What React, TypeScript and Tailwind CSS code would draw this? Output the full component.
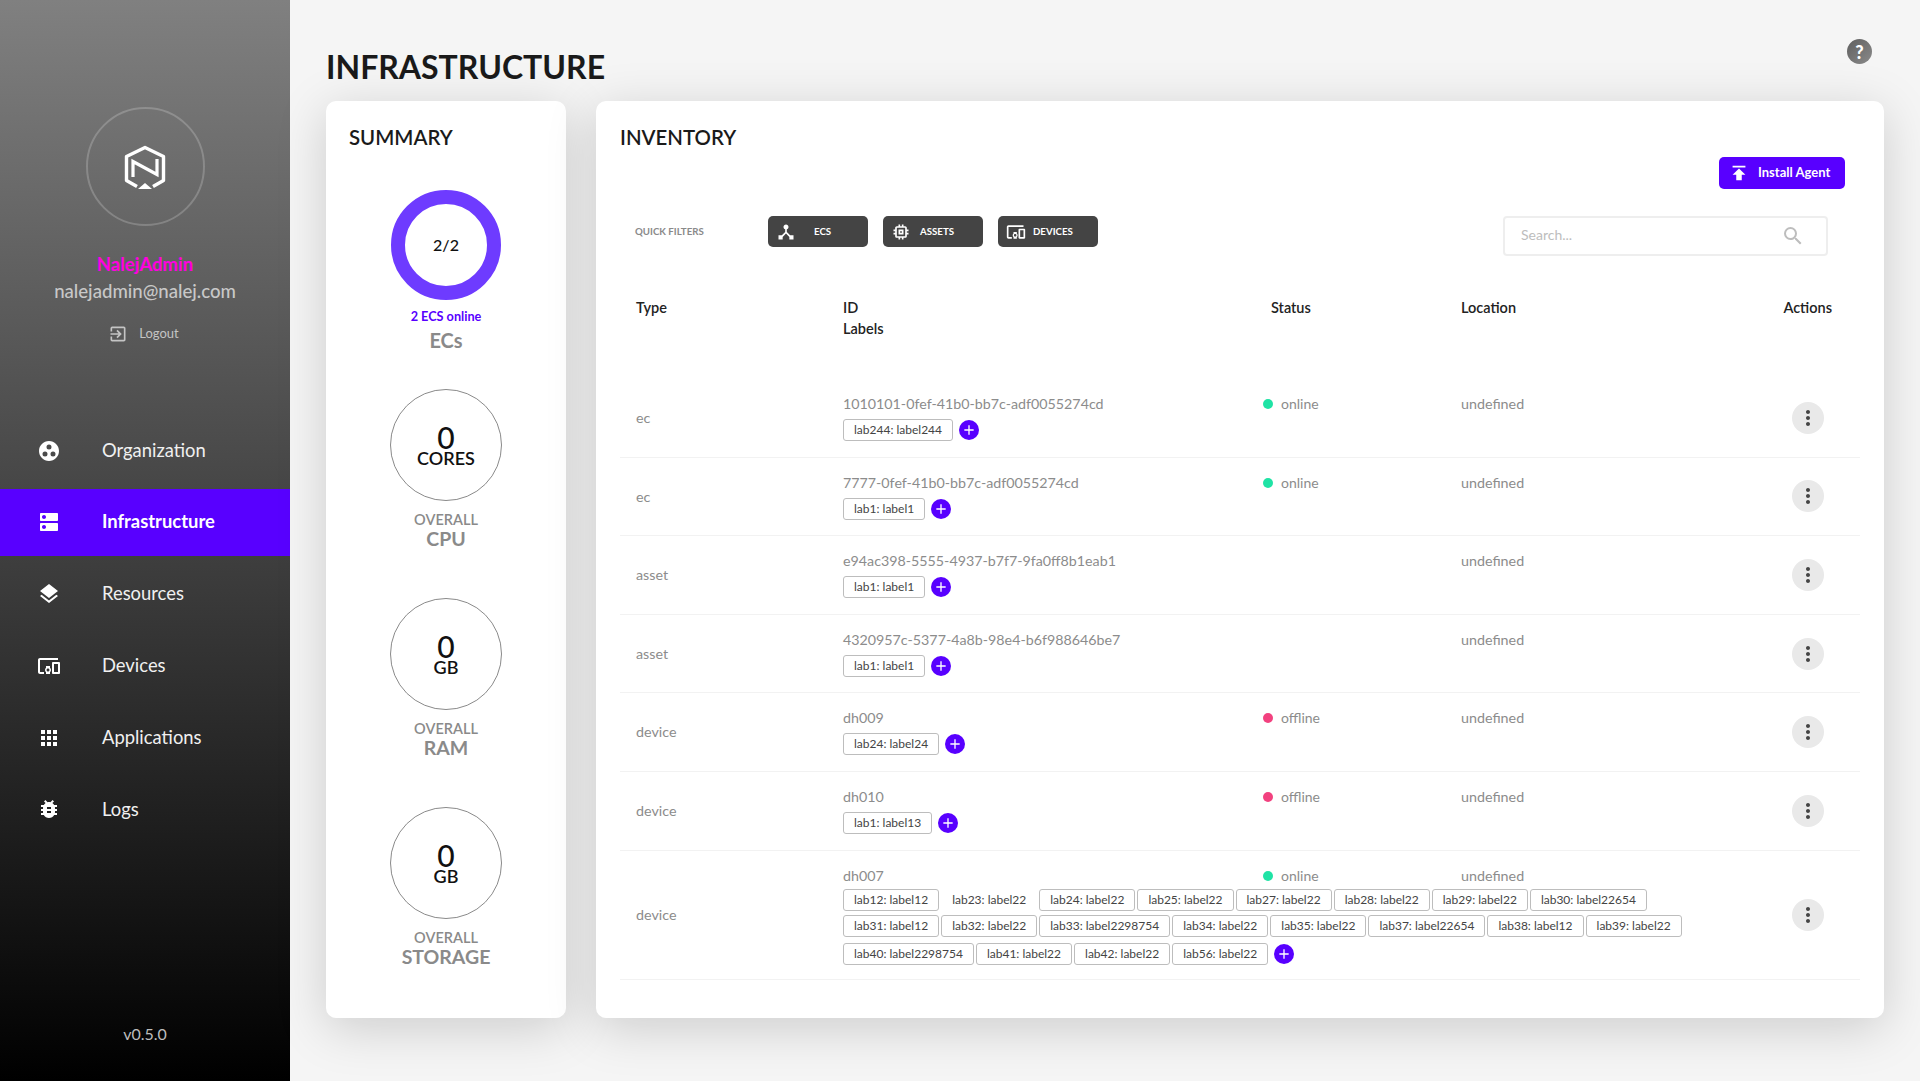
import React from "react";
import { MdGroupWork, MdDns, MdLayers, MdDevicesOther, MdApps, MdBugReport, MdDeviceHub, MdMemory, MdPublish, MdSearch, MdAdd, MdMoreVert, MdExitToApp } from "react-icons/md";

const menu = [
  { name: "Organization", Icon: MdGroupWork },
  { name: "Infrastructure", Icon: MdDns, active: true },
  { name: "Resources", Icon: MdLayers },
  { name: "Devices", Icon: MdDevicesOther },
  { name: "Applications", Icon: MdApps },
  { name: "Logs", Icon: MdBugReport },
];

const rows = [
  { type: "ec", id: "1010101-0fef-41b0-bb7c-adf0055274cd", status: "online", labels: ["lab244: label244"] },
  { type: "ec", id: "7777-0fef-41b0-bb7c-adf0055274cd", status: "online", labels: ["lab1: label1"] },
  { type: "asset", id: "e94ac398-5555-4937-b7f7-9fa0ff8b1eab1", status: "", labels: ["lab1: label1"] },
  { type: "asset", id: "4320957c-5377-4a8b-98e4-b6f988646be7", status: "", labels: ["lab1: label1"] },
  { type: "device", id: "dh009", status: "offline", labels: ["lab24: label24"] },
  { type: "device", id: "dh010", status: "offline", labels: ["lab1: label13"] },
  {
    type: "device",
    id: "dh007",
    status: "online",
    labels: [
      "lab12: label12", "lab23: label22", "lab24: label22", "lab25: label22", "lab27: label22", "lab28: label22", "lab29: label22", "lab30: label22654",
      "lab31: label12", "lab32: label22", "lab33: label2298754", "lab34: label22", "lab35: label22", "lab37: label22654", "lab38: label12", "lab39: label22",
      "lab40: label2298754", "lab41: label22", "lab42: label22", "lab56: label22",
    ],
  },
];

function Logo() {
  return (
    <svg width="42" height="46" viewBox="-1 -1 42 46" fill="none" className="mt-[3px]">
      <path d="M12 40.5 L1.5 34.5 V10.5 L20 1.5 L38.5 10.5 V34.5 L28 40.5" stroke="#fff" strokeWidth="3.4" strokeLinejoin="round" />
      <path d="M8 31 V15.5 L32 28.5 V13" stroke="#fff" strokeWidth="3.2" />
      <path d="M20 37 L27 43 H13 Z" fill="#fff" />
    </svg>
  );
}

function Stat({ big, unit, top, title, mt }: { big: string; unit: string; top: string; title: string; mt: string }) {
  return (
    <div className={`flex flex-col items-center ${mt}`}>
      <div className="w-[112px] h-[112px] rounded-full border border-[#8a8a8a] flex flex-col items-center justify-center text-[#111]">
        <span className="text-[30px] leading-[26px] font-medium mt-[1px]">{big}</span>
        <span className="text-[18px] leading-[18px] font-semibold -mt-[1px]">{unit}</span>
      </div>
      <span className="text-[14.5px] leading-[17px] font-semibold text-[#8a8a8a] mt-[10px]">{top}</span>
      <span className="text-[19.5px] leading-[22px] font-bold text-[#8a8a8a]">{title}</span>
    </div>
  );
}

function Filter({ Icon, label, textClass }: { Icon: React.ComponentType<{ size?: number; className?: string }>; label: string; textClass: string }) {
  return (
    <div className="w-[100px] h-[31px] rounded-[5px] bg-[#444444] flex items-center pl-[8px] text-white">
      <Icon size={20} className="shrink-0" />
      <span className={`text-[9.7px] font-bold ${textClass}`}>{label}</span>
    </div>
  );
}

function Status({ status }: { status: string }) {
  return (
    <div className="flex items-center">
      {status && (
        <>
          <span className={`w-[10px] h-[10px] rounded-full ${status === "online" ? "bg-[#1fe3a5]" : "bg-[#f2417f]"}`} />
          <span className="ml-[8px] text-[14px] text-[#8c8c8c]">{status}</span>
        </>
      )}
    </div>
  );
}

function Row({ row, multi }: { row: (typeof rows)[number]; multi: boolean }) {
  return (
    <div className={`grid grid-cols-[223px_1fr_auto] items-center border-b border-[#f2f2f2] ${multi ? "h-[129px]" : "h-[78.6px]"}`}>
      <div className="pl-[16px] text-[14.3px] text-[#8c8c8c]">{row.type}</div>
      <div className="self-start pt-[15px]">
        <div className="grid grid-cols-[420px_198px_1fr] h-[20px] items-center leading-[20px]">
          <span className="text-[14.25px] text-[#8c8c8c] whitespace-nowrap">{row.id}</span>
          <Status status={row.status} />
          <span className="text-[14.3px] text-[#8c8c8c]">undefined</span>
        </div>
        <div className={`flex flex-wrap items-center w-[860px] gap-x-[2px] gap-y-[4px] ${multi ? "mt-[3px]" : "mt-[5px]"}`}>
          {row.labels.map((l) => (
            <span
              key={l}
              className={`h-[22px] px-[10px] flex items-center rounded-[3px] border text-[12px] text-[#444] whitespace-nowrap ${l === "lab23: label22" ? "border-transparent" : "border-[#bdbdbd]"}`}
            >
              {l}
            </span>
          ))}
          <span className={`flex items-center ml-[4px] ${multi ? "h-[26px]" : "h-[22px]"}`}>
            <span className="w-[20px] h-[20px] rounded-full bg-[#5800ff] flex items-center justify-center text-white">
              <MdAdd size={16} />
            </span>
          </span>
        </div>
      </div>
      <div className="pr-[36px]">
        <div className="w-[32px] h-[32px] rounded-full bg-[#e9e9e9] flex items-center justify-center text-[#444]">
          <MdMoreVert size={24} />
        </div>
      </div>
    </div>
  );
}

export default function App() {
  return (
    <div className="flex w-full h-[1081px] overflow-hidden bg-[#f5f5f5] font-['Lato',sans-serif]">
      <aside className="w-[290px] h-full shrink-0 flex flex-col bg-[linear-gradient(180deg,#808080,#000000)]">
        <div className="flex flex-col items-center pt-[107px]">
          <div className="w-[119px] h-[119px] rounded-full border-2 border-white/20 flex items-center justify-center">
            <Logo />
          </div>
          <div className="mt-[27px] text-[18.5px] leading-[22px] font-bold text-[#ff00e0]">NalejAdmin</div>
          <div className="mt-[6px] text-[18.6px] leading-[21px] font-medium text-[#c8c8c8]">nalejadmin@nalej.com</div>
          <div className="mt-[22px] flex items-center text-[#c4c4c4] h-[20px] -ml-[3px]">
            <MdExitToApp size={20} />
            <span className="ml-[11px] text-[13px]">Logout</span>
          </div>
        </div>
        <nav className="mt-[73px] flex flex-col gap-[4.8px]">
          {menu.map(({ name, Icon, active }) => (
            <div key={name} className={`h-[67px] flex items-center ${active ? "bg-[#5800ff] font-bold text-white" : "text-[#f0f0f0]"}`}>
              <span className="w-[96px] pl-[37px] shrink-0 text-white"><Icon size={24} /></span>
              <span className="ml-[6px] text-[18.4px]">{name}</span>
            </div>
          ))}
        </nav>
        <div className="mt-auto pb-[36px] text-center text-[16px] leading-[22px] text-[#bdbdbd]">v0.5.0</div>
      </aside>

      <main className="flex-1 min-w-0 px-[36px]">
        <header className="h-[101px] flex justify-between">
          <h1 className="mt-[46px] text-[32px] leading-[42px] font-bold text-[#1a1a1a]">INFRASTRUCTURE</h1>
          <div className="mt-[39px] mr-[12px] w-[25px] h-[25px] rounded-full bg-[linear-gradient(135deg,#5f5f5f,#8a8a8a)] flex items-center justify-center text-white text-[18px] leading-none font-black">?</div>
        </header>
        <div className="flex gap-[30px] h-[917px]">
          <section className="w-[240px] shrink-0 rounded-[10px] bg-white shadow-[0_10px_50px_rgba(0,0,0,0.17)] flex flex-col">
            <h2 className="ml-[23px] mt-[24px] text-[20.4px] leading-[24px] font-semibold text-[#1a1a1a]">SUMMARY</h2>
            <div className="flex flex-col items-center mt-[41px]">
              <div className="w-[110px] h-[110px] rounded-full border-[14px] border-[#6e3bff] flex items-center justify-center text-[16px] font-medium text-[#111]">2/2</div>
              <span className="mt-[8px] text-[12.7px] leading-[16px] font-bold text-[#5800ff]">2 ECS online</span>
              <span className="mt-[4px] text-[20px] leading-[24px] font-bold text-[#8a8a8a]">ECs</span>
            </div>
            <Stat big="0" unit="CORES" top="OVERALL" title="CPU" mt="mt-[37px]" />
            <Stat big="0" unit="GB" top="OVERALL" title="RAM" mt="mt-[47.5px]" />
            <Stat big="0" unit="GB" top="OVERALL" title="STORAGE" mt="mt-[48.5px]" />
          </section>

          <section className="flex-1 min-w-0 rounded-[10px] bg-white shadow-[0_10px_50px_rgba(0,0,0,0.17)] px-[24px]">
            <div className="flex justify-between">
              <h2 className="mt-[24px] text-[20.4px] leading-[24px] font-semibold text-[#1a1a1a]">INVENTORY</h2>
              <button className="mt-[56px] mr-[15px] w-[126px] h-[32px] rounded-[5px] bg-[#5800ff] flex items-center pl-[9px] text-white">
                <MdPublish size={22} />
                <span className="ml-[8px] text-[13px] font-bold whitespace-nowrap">Install Agent</span>
              </button>
            </div>
            <div className="flex items-start mt-[27px]">
              <span className="ml-[15px] w-[133px] h-[31px] flex items-center text-[9.7px] font-bold text-[#8a8a8a]">QUICK FILTERS</span>
              <div className="flex gap-[15px]">
                <Filter Icon={MdDeviceHub} label="ECS" textClass="ml-[18px]" />
                <Filter Icon={MdMemory} label="ASSETS" textClass="ml-[9px]" />
                <Filter Icon={MdDevicesOther} label="DEVICES" textClass="ml-[7px]" />
              </div>
              <div className="ml-auto mr-[32px] w-[325px] h-[40px] rounded-[4px] border-2 border-[#eeeeee] flex items-center justify-between pl-[16px] pr-[21px]">
                <span className="text-[14px] leading-[20px] -mt-[2px] text-[#bdbdbd]">Search...</span>
                <MdSearch size={24} className="text-[#bdbdbd]" />
              </div>
            </div>
            <div className="grid grid-cols-[223px_420px_198px_1fr_auto] mt-[41px] h-[82px] text-[14.5px] leading-[21px] font-semibold text-[#222]">
              <span className="pl-[16px]">Type</span>
              <div className="flex flex-col">
                <span>ID</span>
                <span>Labels</span>
              </div>
              <span className="pl-[8px]">Status</span>
              <span>Location</span>
              <span className="pr-[28px]">Actions</span>
            </div>
            <div className="flex flex-col">
              {rows.map((r) => (
                <Row key={r.id} row={r} multi={r.id === "dh007"} />
              ))}
            </div>
          </section>
        </div>
      </main>
    </div>
  );
}
